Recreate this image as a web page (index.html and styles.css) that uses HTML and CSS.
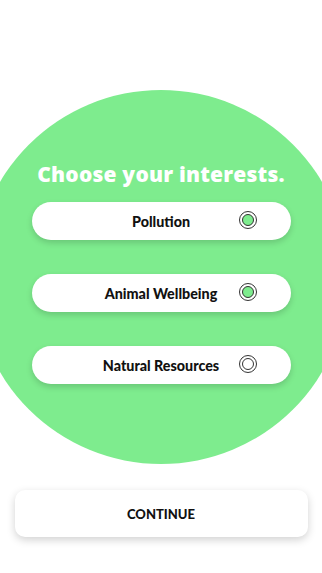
FILE: index.html
```html
<!DOCTYPE html>
<html lang="en">
<head>
  <meta charset="UTF-8" />
  <meta name="viewport" content="width=device-width, initial-scale=1.0"/>
  <title>Choose your interests</title>
  <link rel="stylesheet" href="styles.css">
</head>
<body>

  <div class="screen">
    <div class="blob">
      <h1 class="title">Choose your interests.</h1>

      <div class="options">
        <div class="option">
          <span class="option-label">Pollution</span>
          <span class="radio checked"></span>
        </div>
        <div class="option">
          <span class="option-label">Animal Wellbeing</span>
          <span class="radio checked"></span>
        </div>
        <div class="option">
          <span class="option-label">Natural Resources</span>
          <span class="radio"></span>
        </div>
      </div>
    </div>

    <button class="continue">CONTINUE</button>
  </div>

</body>
</html>
```

FILE: styles.css
```css
html, body {
  margin: 0;
  padding: 0;
  background: #ffffff;
  overflow: hidden;
}

body {
  font-family: 'Lato', 'Open Sans', sans-serif;
  color: #111111;
}

.screen {
  width: 322px;
  height: 573px;
  display: flex;
  flex-direction: column;
  align-items: center;
  overflow: hidden;
}

.blob {
  flex: none;
  width: 374px;
  height: 374px;
  margin-top: 90px;
  border-radius: 50%;
  background: #7eec8e;
  display: flex;
  flex-direction: column;
  align-items: center;
  padding-top: 71px;
  box-sizing: border-box;
}

.title {
  margin: 0;
  color: #ffffff;
  font-family: 'Open Sans', 'Lato', sans-serif;
  font-size: 21px;
  line-height: 26px;
  font-weight: 800;
  letter-spacing: 0.2px;
}

.options {
  display: flex;
  flex-direction: column;
  gap: 34px;
  margin-top: 15px;
}

.option {
  position: relative;
  width: 259px;
  height: 38px;
  border-radius: 19px;
  background: #ffffff;
  box-shadow: 0 3px 6px rgba(0, 0, 0, 0.16);
  display: flex;
  align-items: center;
  justify-content: center;
}

.option-label {
  font-size: 14.3px;
  font-weight: 900;
  color: #111111;
}

.radio {
  position: absolute;
  right: 34px;
  top: 9px;
  width: 16px;
  height: 16px;
  border-radius: 50%;
  border: 1.5px solid #333333;
  background: #ffffff;
  display: flex;
  align-items: center;
  justify-content: center;
}

.radio::after {
  content: "";
  width: 10px;
  height: 10px;
  border-radius: 50%;
  border: 1.3px solid #333333;
  background: #ffffff;
}

.radio.checked::after {
  background: #7eec8e;
}

.continue {
  flex: none;
  margin-top: 26px;
  width: 293px;
  height: 47px;
  border: none;
  border-radius: 10px;
  background: #ffffff;
  box-shadow: 0 3px 8px rgba(0, 0, 0, 0.18);
  font-family: 'Lato', 'Open Sans', sans-serif;
  font-size: 13px;
  font-weight: 900;
  color: #111111;
  letter-spacing: 0;
}
```
